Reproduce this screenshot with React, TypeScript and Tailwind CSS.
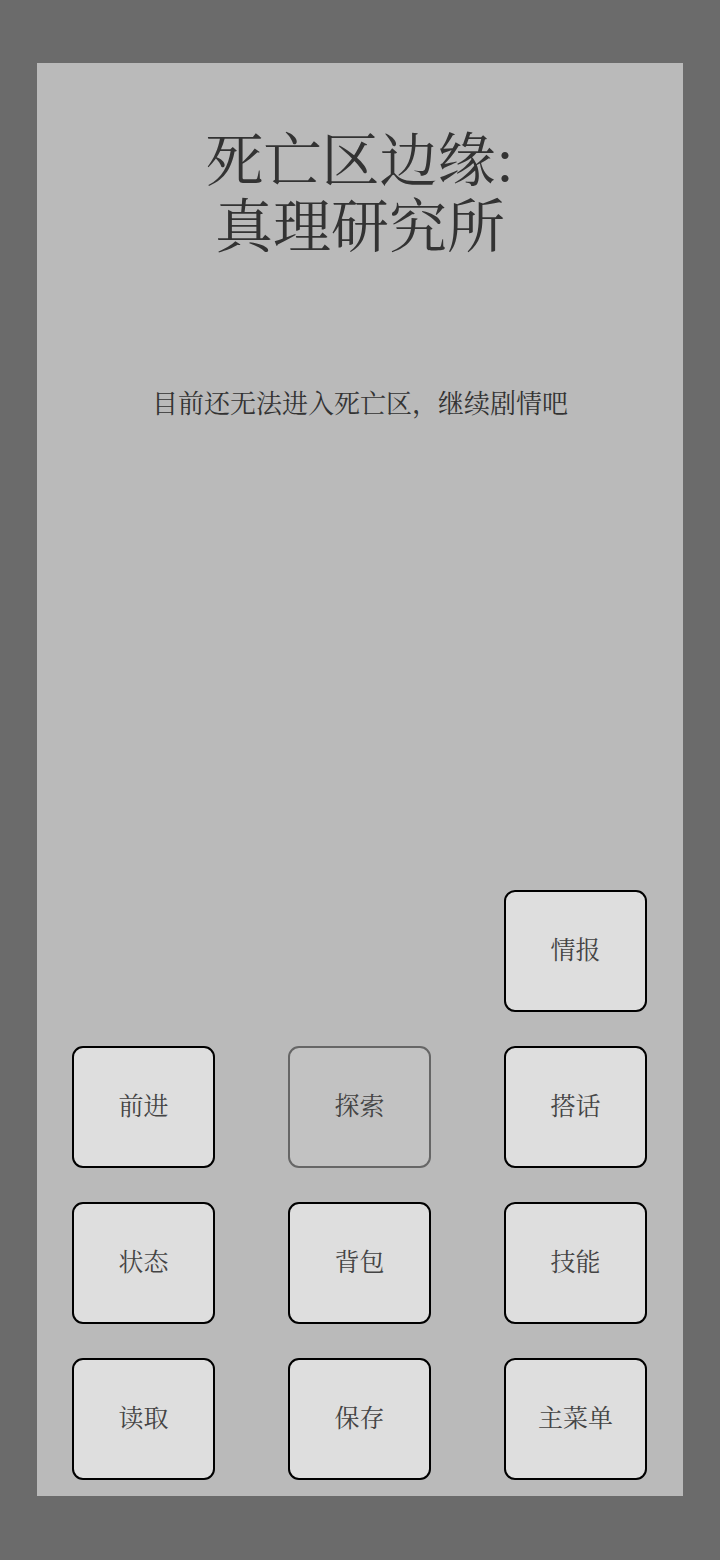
import React from 'react';

const serif = { fontFamily: '"Noto Serif CJK SC", "Liberation Serif", "Noto Sans CJK SC", serif' };

type Btn = { label: string; disabled?: boolean; col?: string };

const buttons: Btn[] = [
  { label: '情报', col: 'col-start-3' },
  { label: '前进' },
  { label: '探索', disabled: true },
  { label: '搭话' },
  { label: '状态' },
  { label: '背包' },
  { label: '技能' },
  { label: '读取' },
  { label: '保存' },
  { label: '主菜单' },
];

export default function App() {
  return (
    <div className="min-h-[1560px] bg-[#6b6b6b] pt-[63px]" style={serif}>
      <div className="mx-auto flex h-[1433px] w-[646px] flex-col bg-[#bababa] px-[35px] pb-[16px]">
        <h1 className="mt-[60px] flex flex-col items-center text-[58px] font-normal text-[#333]">
          <span className="block h-[66px] leading-[66px]">死亡区边缘:</span>
          <span className="block h-[66px] leading-[66px]">真理研究所</span>
        </h1>
        <p className="mt-[132px] text-center text-[26px] leading-[30px] text-[#333]">
          目前还无法进入死亡区，继续剧情吧
        </p>
        <div className="mt-auto grid grid-cols-[143px_143px_143px] gap-x-[73px] gap-y-[34px]">
          {buttons.map((b) => (
            <button
              key={b.label}
              disabled={b.disabled}
              className={
                b.disabled
                  ? 'h-[122px] rounded-[11px] border-2 border-[#666] bg-[#c2c2c2] pb-[4px] text-[25px] text-[#444]'
                  : b.col === 'col-start-3'
                  ? 'col-start-3 h-[122px] rounded-[11px] border-2 border-black bg-[#dedede] pb-[4px] text-[25px] text-[#444]'
                  : 'h-[122px] rounded-[11px] border-2 border-black bg-[#dedede] pb-[4px] text-[25px] text-[#444]'
              }
            >
              {b.label}
            </button>
          ))}
        </div>
      </div>
    </div>
  );
}
